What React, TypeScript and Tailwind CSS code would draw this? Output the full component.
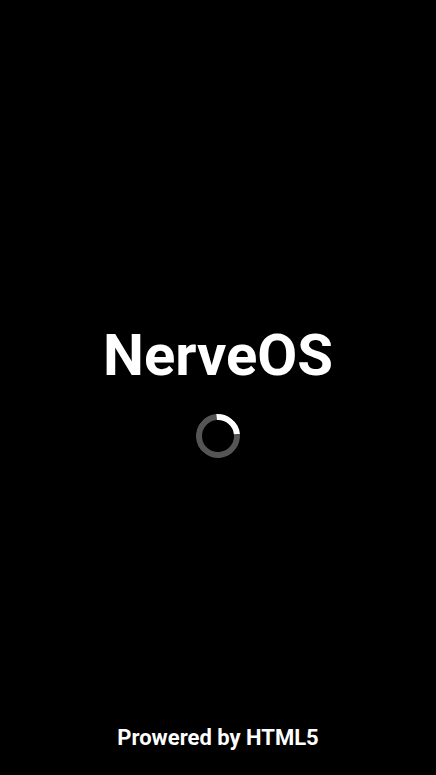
export default function App() {
  return (
    <div
      className="flex h-[775px] w-full flex-col bg-black text-white"
      style={{ fontFamily: 'Roboto, "Noto Sans", sans-serif' }}
    >
      {/* Splash */}
      <div className="flex flex-1 flex-col items-center justify-center pt-[57px]">
        <h1 className="text-[58px] font-bold leading-none">NerveOS</h1>
        <div className="mt-[30px] h-[44px] w-[44px] rotate-[40deg] rounded-full border-[6px] border-[#555555] border-t-white" />
      </div>

      {/* Footer */}
      <div className="pb-[26px] text-center text-[22px] font-bold leading-none">
        Prowered by HTML5
      </div>
    </div>
  );
}
